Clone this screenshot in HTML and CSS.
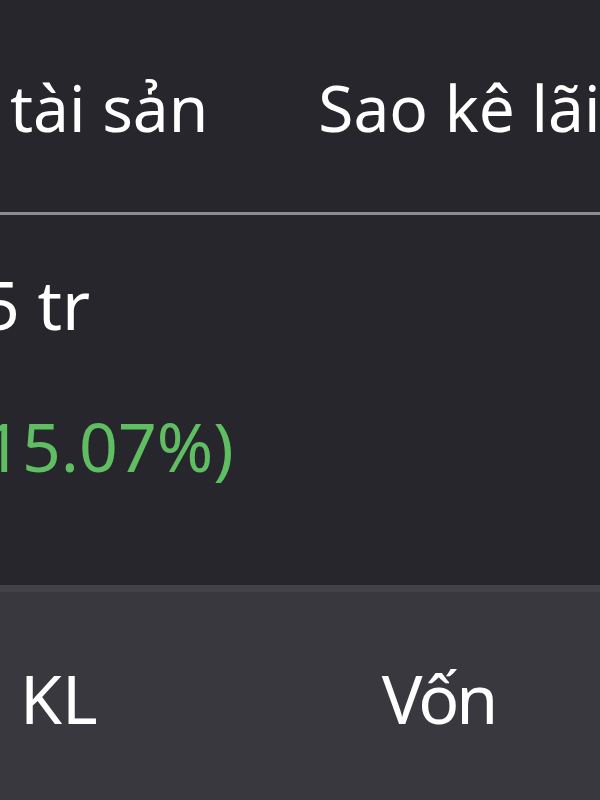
FILE: index.html
```html
<!DOCTYPE html>
<html lang="vi">
<head>
<meta charset="utf-8">
<title>Tài sản</title>
<link rel="stylesheet" href="styles.css">
</head>
<body>
<div class="screen">
  <div class="tabs">
    <div class="tab tab-first">tài sản</div>
    <div class="tab tab-second">Sao kê lãi</div>
  </div>
  <div class="divider"></div>
  <div class="summary">
    <div class="value">5 tr</div>
    <div class="change">15.07%)</div>
  </div>
  <div class="table-head">
    <div class="col col-kl">KL</div>
    <div class="col col-von">Vốn</div>
  </div>
</div>
</body>
</html>
```

FILE: styles.css
```css
html, body {
  margin: 0;
  padding: 0;
  background: #27262c;
  overflow: hidden;
}
.screen {
  width: 600px;
  height: 800px;
  display: flex;
  flex-direction: column;
  overflow: hidden;
  font-family: "Noto Sans", "Open Sans", sans-serif;
  color: #ffffff;
  white-space: nowrap;
}
.tabs {
  height: 212px;
  display: flex;
  align-items: flex-start;
  box-sizing: border-box;
  padding-top: 76px;
  font-size: 64px;
  line-height: 1;
}
.tab-first {
  margin-left: 10px;
}
.tab-second {
  margin-left: 110px;
}
.divider {
  height: 3px;
  background: #8d8c91;
  flex: none;
}
.summary {
  height: 370px;
  display: flex;
  flex-direction: column;
  font-size: 68px;
  line-height: 1;
  box-sizing: border-box;
  padding-top: 55px;
  gap: 74px;
}
.value {
  margin-left: -19px;
}
.change {
  margin-left: -17px;
  color: #5fbd62;
}
.table-head {
  flex: 1;
  display: flex;
  align-items: flex-start;
  background: #39383e;
  border-top: 7px solid #434248;
  box-sizing: border-box;
  padding-top: 72px;
  font-size: 68px;
  line-height: 1;
}
.col-kl {
  margin-left: 20px;
}
.col-von {
  margin-left: 284px;
  letter-spacing: -3px;
}
```
